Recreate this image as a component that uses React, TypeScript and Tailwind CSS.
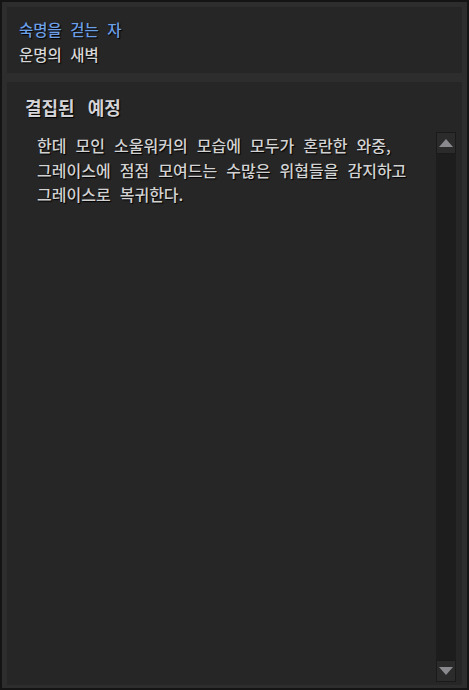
const FONT = '"Noto Sans CJK KR", "Noto Sans", sans-serif';

const SHADOW = "[text-shadow:1px_1px_1px_#000]";

function Triangle({ down }: { down?: boolean }) {
  return (
    <svg width="14" height="10" viewBox="0 0 14 10" aria-hidden>
      {down ? (
        <polygon points="0,1 14,1 7,9" fill="#8a8a8e" />
      ) : (
        <polygon points="7,1 14,9 0,9" fill="#8a8a8e" />
      )}
    </svg>
  );
}

function ScrollBar() {
  return (
    <div className="flex w-[20px] flex-col bg-[#1d1d1d]">
      <button
        type="button"
        className="flex h-[22px] w-[20px] items-center justify-center border border-[#1a1a1a] bg-[#2b2b2c]"
      >
        <Triangle />
      </button>
      <div className="flex-1" />
      <button
        type="button"
        className="flex h-[22px] w-[20px] items-center justify-center border border-[#1a1a1a] bg-[#2b2b2c]"
      >
        <Triangle down />
      </button>
    </div>
  );
}

export default function App() {
  return (
    <div
      className="flex h-[690px] w-[469px] flex-col gap-[9px] border-2 border-[#141414] bg-[#2d2d2d] px-[5px] pt-[5px] pb-[3px]"
      style={{ fontFamily: FONT }}
    >
      <section className="flex h-[66px] flex-col justify-center bg-[#262626] pl-[12px] pt-[3px]">
        <p
          className={`text-[15.5px] leading-[25px] font-medium text-[#6b9fe6] [word-spacing:5px] ${SHADOW}`}
        >
          숙명을 걷는 자
        </p>
        <p
          className={`text-[15.5px] leading-[25px] font-medium text-[#d6d6d6] [word-spacing:5px] ${SHADOW}`}
        >
          운명의 새벽
        </p>
      </section>

      <section className="flex flex-1 flex-col bg-[#262626] pr-[6px] pb-[3px]">
        <h2
          className={`pt-[12px] pl-[18px] text-[18px] leading-[26px] font-bold text-[#d4d4d8] [word-spacing:9px] ${SHADOW}`}
        >
          결집된 예정
        </h2>
        <div className="mt-[12px] flex flex-1">
          <div
            className={`flex-1 pl-[30px] pt-[1px] text-[16px] leading-[24.5px] font-medium text-[#d2d2d2] [word-spacing:5.5px] ${SHADOW}`}
          >
            한데 모인 소울워커의 모습에 모두가 혼란한 와중,
            <br />
            그레이스에 점점 모여드는 수많은 위협들을 감지하고
            <br />
            그레이스로 복귀한다.
          </div>
          <ScrollBar />
        </div>
      </section>
    </div>
  );
}
